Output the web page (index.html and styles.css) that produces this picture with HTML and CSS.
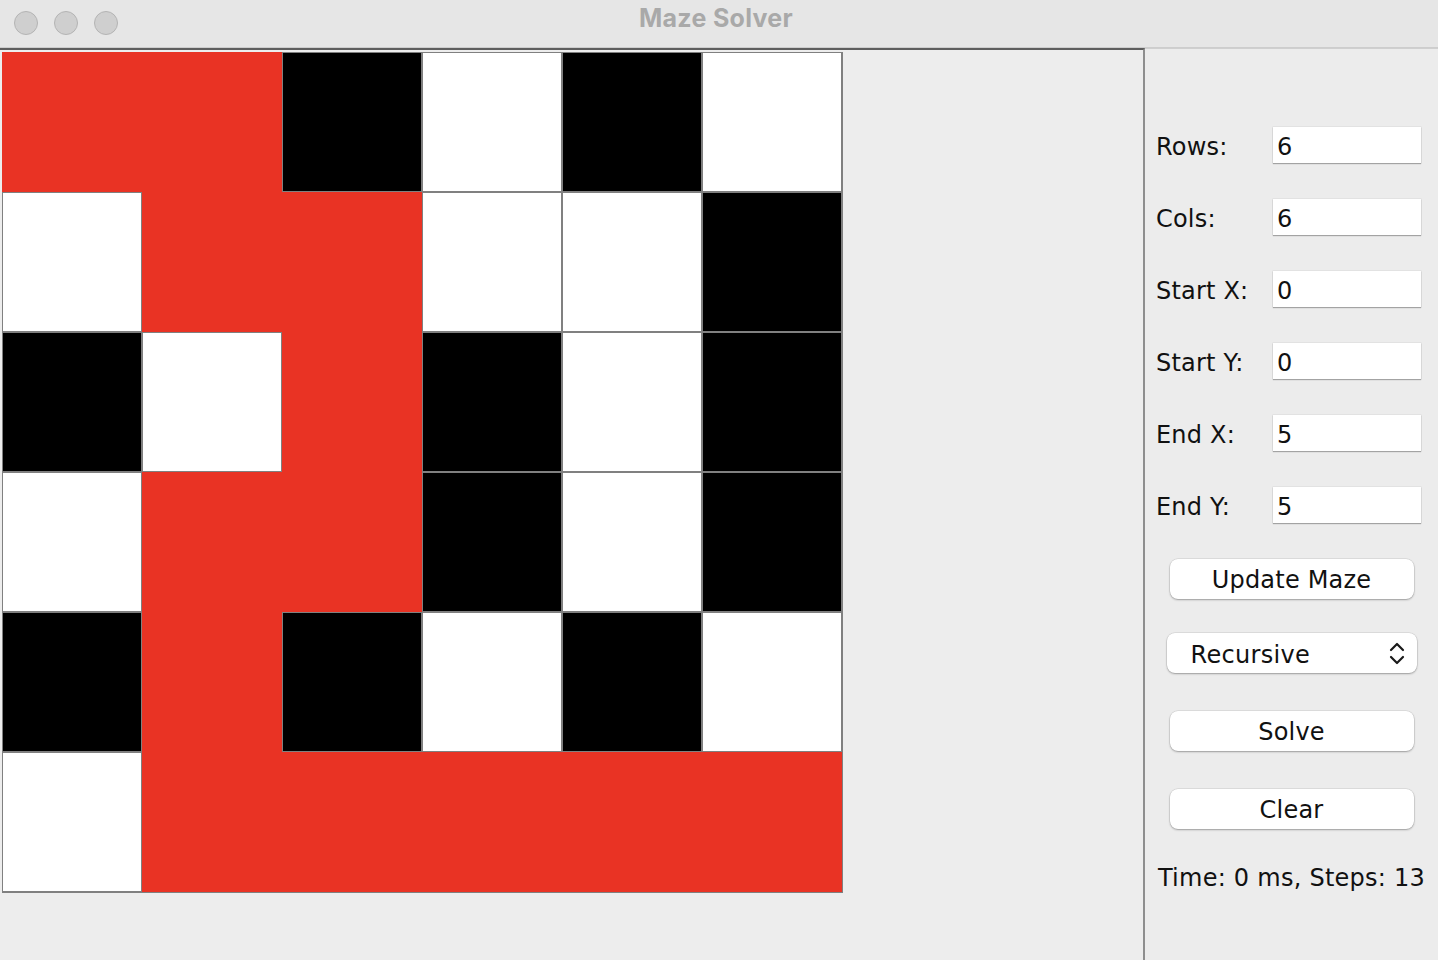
FILE: index.html
```html
<!DOCTYPE html>
<html>
<head>
<meta charset="utf-8">
<title>Maze Solver</title>
<link rel="stylesheet" href="styles.css">
</head>
<body>
<div class="window">
  <div class="titlebar">
    <div class="lights">
      <span class="light"></span><span class="light"></span><span class="light"></span>
    </div>
    <div class="title">Maze Solver</div>
  </div>
  <div class="content">
    <div class="maze-panel">
      <div class="maze">
        <div class="cell p"></div><div class="cell p"></div><div class="cell b"></div><div class="cell w"></div><div class="cell b"></div><div class="cell w"></div>
        <div class="cell w"></div><div class="cell p"></div><div class="cell p"></div><div class="cell w"></div><div class="cell w"></div><div class="cell b"></div>
        <div class="cell b"></div><div class="cell w"></div><div class="cell p"></div><div class="cell b"></div><div class="cell w"></div><div class="cell b"></div>
        <div class="cell w"></div><div class="cell p"></div><div class="cell p"></div><div class="cell b"></div><div class="cell w"></div><div class="cell b"></div>
        <div class="cell b"></div><div class="cell p"></div><div class="cell b"></div><div class="cell w"></div><div class="cell b"></div><div class="cell w"></div>
        <div class="cell w"></div><div class="cell p"></div><div class="cell p"></div><div class="cell p"></div><div class="cell p"></div><div class="cell p"></div>
      </div>
    </div>
    <div class="side">
      <div class="form">
        <label class="lbl">Rows:</label><div class="field">6</div>
        <label class="lbl">Cols:</label><div class="field">6</div>
        <label class="lbl">Start X:</label><div class="field">0</div>
        <label class="lbl">Start Y:</label><div class="field">0</div>
        <label class="lbl">End X:</label><div class="field">5</div>
        <label class="lbl">End Y:</label><div class="field">5</div>
      </div>
      <div class="btn btn-update">Update Maze</div>
      <div class="combo">
        <span class="combo-text">Recursive</span>
        <svg class="chev" width="16" height="24" viewBox="0 0 16 24">
          <path d="M2 8 L8 2 L14 8" fill="none" stroke="#1a1a1a" stroke-width="2.2" stroke-linecap="round" stroke-linejoin="round"/>
          <path d="M2 15 L8 21 L14 15" fill="none" stroke="#1a1a1a" stroke-width="2.2" stroke-linecap="round" stroke-linejoin="round"/>
        </svg>
      </div>
      <div class="btn btn-solve">Solve</div>
      <div class="btn btn-clear">Clear</div>
      <div class="status">Time: 0 ms, Steps: 13</div>
    </div>
  </div>
</div>
</body>
</html>
```

FILE: styles.css
```css
* { box-sizing: border-box; }
html, body {
  margin: 0;
  padding: 0;
  width: 1438px;
  height: 960px;
  overflow: hidden;
  background: #ececec;
  font-family: "DejaVu Sans", "Liberation Sans", sans-serif;
}
.window {
  width: 1438px;
  height: 960px;
  display: flex;
  flex-direction: column;
}
.titlebar {
  height: 48px;
  background: #e6e6e6;
  border-bottom: 1px solid #cdcdcd;
  display: flex;
  align-items: center;
  position: relative;
  flex: none;
}
.lights {
  display: flex;
  gap: 16px;
  padding-left: 14px;
  margin-top: -2px;
}
.light {
  width: 24px;
  height: 24px;
  border-radius: 50%;
  background: #cfcfcf;
  border: 1px solid #b4b4b4;
}
.title {
  position: absolute;
  left: 0;
  right: 0;
  top: 3px;
  text-align: center;
  font-family: "Inter", "Liberation Sans", sans-serif;
  font-weight: 700;
  font-size: 25px;
  color: #a9a9a9;
  letter-spacing: 0.3px;
  padding-right: 6px;
}
.content {
  flex: 1;
  display: flex;
}
.maze-panel {
  width: 1145px;
  flex: none;
  border-top: 2px solid #5e5e5e;
  border-right: 2px solid #8e8e8e;
  padding: 2px 0 0 2px;
  background: #ededed;
}
.maze {
  display: grid;
  grid-template-columns: repeat(6, 140px);
  grid-template-rows: repeat(6, 140px);
  width: 841px;
  height: 841px;
  border-right: 1px solid #808080;
  border-bottom: 1px solid #808080;
}
.cell.p { background: #e93324; }
.cell.w { background: #ffffff; box-shadow: inset 0 0 0 1px #808080; }
.cell.b { background: #000000; box-shadow: inset 0 0 0 1px #808080; }
.side {
  flex: 1;
  border-top: 1px solid #cfcfcf;
  background: #ececec;
  display: flex;
  flex-direction: column;
  align-items: center;
  padding-top: 78px;
  color: #111;
  font-size: 24px;
}
.form {
  display: grid;
  grid-template-columns: 117px 148px;
  grid-auto-rows: 36px;
  row-gap: 36px;
  align-self: flex-start;
  margin-left: 11px;
}
.lbl {
  display: flex;
  align-items: center;
  padding-top: 4px;
  letter-spacing: 0.2px;
}
.field {
  background: #fff;
  box-shadow: 0 1px 1px rgba(0,0,0,0.28), 0 0 0 0.5px rgba(0,0,0,0.08);
  display: flex;
  align-items: center;
  padding-left: 4px;
  padding-top: 4px;
}
.btn, .combo {
  background: #fff;
  border-radius: 8px;
  box-shadow: 0 1px 2px rgba(0,0,0,0.3), 0 0 0 0.5px rgba(0,0,0,0.12);
  height: 40px;
  display: flex;
  align-items: center;
  justify-content: center;
}
.btn { width: 244px; padding-top: 2px; letter-spacing: 0.2px; }
.btn-update { margin-top: 36px; }
.combo {
  width: 250px;
  margin-top: 34px;
  justify-content: space-between;
  padding: 0 12px 0 24px;
}
.combo-text { padding-top: 4px; letter-spacing: 0.3px; }
.chev { display: block; margin-top: 1px; }
.btn-solve { margin-top: 38px; }
.btn-clear { margin-top: 38px; }
.status {
  margin-top: 35px;
  letter-spacing: 0.25px;
}
```
